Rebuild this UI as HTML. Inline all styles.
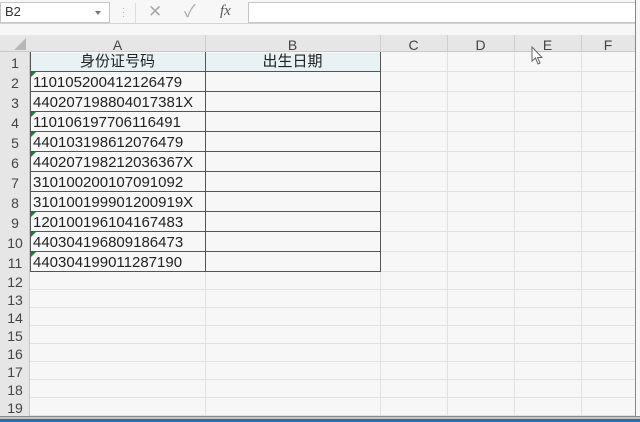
<!DOCTYPE html>
<html><head><meta charset="utf-8"><style>
*{margin:0;padding:0;box-sizing:border-box}
body{width:640px;height:422px;background:#f7f7f7;position:relative;overflow:hidden;font-family:"Liberation Sans","Noto Sans CJK SC",sans-serif;}
.a{position:absolute}
.hl{position:absolute;height:1px;background:#e1e1e1}
.vl{position:absolute;width:1px;background:#e1e1e1}
.t{position:absolute;font-size:15px;color:#222;line-height:20px;white-space:nowrap}
.rn{position:absolute;left:0;width:30px;text-align:center;font-size:14px;color:#444}
.ch{position:absolute;top:35px;height:17px;font-size:14px;color:#444;text-align:center;line-height:20px}
.tri{position:absolute;width:0;height:0;border-top:5px solid #1e7b34;border-right:5px solid transparent}
</style></head><body>
<div class="a" style="left:0;top:0;width:640px;height:24px;background:#f7f7f7;border-bottom:1px solid #d4d4d4"></div>
<div class="a" style="left:0;top:2px;width:110px;height:21px;background:#fff;border:1px solid #c6c6c6"></div>
<div class="t" style="left:5px;top:2px;font-size:13px;color:#333">B2</div>
<div class="a" style="left:95px;top:11px;border-top:4px solid #777;border-left:3px solid transparent;border-right:3px solid transparent"></div>
<div class="a" style="left:122px;top:7px;color:#aaa;font-size:10px;line-height:4px">·<br>·<br>·</div>
<div class="a" style="left:135px;top:3px;width:1px;height:20px;background:#ddd"></div>
<div class="t" style="left:148px;top:2px;color:#aaa;font-size:17px">✕</div>
<div class="t" style="left:184px;top:2px;color:#aaa;font-size:17px">✓</div>
<div class="t" style="left:220px;top:1px;color:#555;font-family:'Liberation Serif',serif;font-style:italic;font-size:15px">fx</div>
<div class="a" style="left:248px;top:2px;width:392px;height:21px;background:#fff;border:1px solid #c6c6c6"></div>
<div class="a" style="left:0;top:35px;width:635px;height:17px;background:#e6e6e6;border-bottom:1px solid #c9c9c9"></div>
<div class="a" style="left:0;top:52px;width:30px;height:364px;background:#e6e6e6;border-right:1px solid #c9c9c9"></div>
<div class="a" style="left:14px;top:38px;width:0;height:0;border-bottom:12px solid #b7b7b7;border-left:12px solid transparent"></div>
<div class="ch" style="left:30px;width:175px">A</div>
<div class="ch" style="left:205px;width:175px">B</div>
<div class="ch" style="left:380px;width:67px">C</div>
<div class="ch" style="left:447px;width:67px">D</div>
<div class="ch" style="left:514px;width:67px">E</div>
<div class="ch" style="left:581px;width:54px">F</div>
<div class="vl" style="left:205px;top:35px;height:17px;background:#cfcfcf"></div>
<div class="vl" style="left:380px;top:35px;height:17px;background:#cfcfcf"></div>
<div class="vl" style="left:447px;top:35px;height:17px;background:#cfcfcf"></div>
<div class="vl" style="left:514px;top:35px;height:17px;background:#cfcfcf"></div>
<div class="vl" style="left:581px;top:35px;height:17px;background:#cfcfcf"></div>
<div class="vl" style="left:205px;top:52px;height:364px"></div>
<div class="vl" style="left:380px;top:52px;height:364px"></div>
<div class="vl" style="left:447px;top:52px;height:364px"></div>
<div class="vl" style="left:514px;top:52px;height:364px"></div>
<div class="vl" style="left:581px;top:52px;height:364px"></div>
<div class="a" style="left:635px;top:0;width:5px;height:422px;background:#f7f7f7;border-left:1px solid #888"></div>
<div class="a" style="left:30px;top:53px;width:350px;height:19px;background:#e8f2f5"></div>
<div id="g"></div>
<div class="a" style="left:30px;top:52px;width:351px;height:220px;border:1px solid #555;border-top:none"></div>
<div class="a" style="left:205px;top:52px;width:1px;height:220px;background:#555"></div>
<div class="t" style="left:30px;top:52px;width:175px;text-align:center">身份证号码</div>
<div class="t" style="left:205px;top:52px;width:175px;text-align:center">出生日期</div>
<div class="a" style="left:0;top:416px;width:640px;height:6px;background:#c4c4c4;border-top:1px solid #8a8a8a;border-bottom:3px solid #2a6eb0"></div>
<svg class="a" style="left:531px;top:46px" width="14" height="20" viewBox="0 0 14 20"><path d="M1 1 L1 15 L4.5 12 L7 18 L9 17 L6.5 11.5 L11 11.5 Z" fill="#fff" stroke="#666" stroke-width="1"/></svg>
<script>
(function(){
var ids=["110105200412126479","440207198804017381X","110106197706116491","440103198612076479","440207198212036367X","310100200107091092","310100199901200919X","120100196104167483","440304196809186473","440304199011287190"];
var tri=[1,0,1,1,1,0,0,1,1,1];
var h="";
for(var r=1;r<=19;r++){
 var y=r<=11?52+(r-1)*20:272+(r-12)*18, ht=r<=11?20:18;
 h+='<div class="rn" style="top:'+y+'px;height:'+ht+'px;line-height:'+(ht+2)+'px">'+r+'</div>';
 h+='<div class="hl" style="left:30px;width:605px;top:'+(y+ht-1)+'px"></div>';
 if(r<=11) h+='<div class="a" style="left:30px;width:350px;height:1px;background:#555;top:'+(y+ht-1)+'px"></div>';
 if(r>=2&&r<=11){
  h+='<div class="t" style="left:33px;top:'+(y+1)+'px">'+ids[r-2]+'</div>';
  if(tri[r-2]) h+='<div class="tri" style="left:31px;top:'+y+'px"></div>';
 }
}
document.getElementById("g").outerHTML=h;
})();
</script>
</body></html>
